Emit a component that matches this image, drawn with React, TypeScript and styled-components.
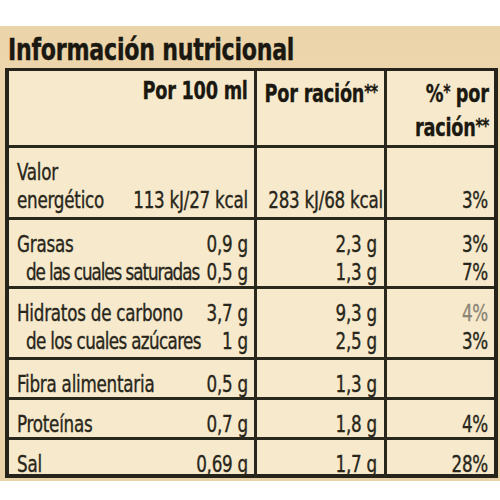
import React from 'react'
import styled, { createGlobalStyle } from 'styled-components'

// no condensed Myriad available: DejaVu Sans Condensed squeezed horizontally
const BODY_SQUEEZE = 0.81
const HEAD_SQUEEZE = 0.82

const GlobalStyle = createGlobalStyle`
  html, body {
    margin: 0;
    padding: 0;
    background: #ffffff;
    overflow: hidden;
  }
  body {
    font-family: "DejaVu Sans Condensed", "Liberation Sans", sans-serif;
  }
`

interface Line {
	label?: string
	indent?: boolean
	tight?: number
	per100?: string
	portion?: string
	pct?: string
	faded?: boolean
}

interface Row {
	key: string
	height: number
	lines: Line[]
}

const rows: Row[] = [
	{
		key: 'energia',
		height: 69,
		lines: [
			{ label: 'Valor' },
			{ label: 'energético', per100: '113 kJ/27 kcal', portion: '283 kJ/68 kcal', pct: '3%' },
		],
	},
	{
		key: 'grasas',
		height: 66,
		lines: [
			{ label: 'Grasas', per100: '0,9 g', portion: '2,3 g', pct: '3%' },
			{ label: 'de las cuales saturadas', indent: true, tight: -1.3, per100: '0,5 g', portion: '1,3 g', pct: '7%' },
		],
	},
	{
		key: 'hidratos',
		height: 68,
		lines: [
			{ label: 'Hidratos de carbono', per100: '3,7 g', portion: '9,3 g', pct: '4%', faded: true },
			{ label: 'de los cuales azúcares', indent: true, tight: -0.8, per100: '1 g', portion: '2,5 g', pct: '3%' },
		],
	},
	{ key: 'fibra', height: 37, lines: [{ label: 'Fibra alimentaria', per100: '0,5 g', portion: '1,3 g' }] },
	{ key: 'proteinas', height: 37, lines: [{ label: 'Proteínas', per100: '0,7 g', portion: '1,8 g', pct: '4%' }] },
	{ key: 'sal', height: 34, lines: [{ label: 'Sal', per100: '0,69 g', portion: '1,7 g', pct: '28%' }] },
]

const Label = styled.div`
    margin-top: 26px;
    background: linear-gradient(180deg, #ecd4aa 0%, #efd9b2 40%, #ead2a8 100%);
    padding: 6px 2px 3px 5px;
`

const Title = styled.h1`
    margin: 0 0 0 3px;
    font-size: 30px;
    line-height: 36px;
    font-weight: bold;
    letter-spacing: -0.3px;
    color: #1a1810;
    -webkit-text-stroke: 0.4px #1a1810;
    white-space: nowrap;
    transform: scaleX(0.82);
    transform-origin: left top;
`

const Table = styled.div`
    border: 4px solid #26241a;
    border-top-width: 3px;
    background: #f6e9cc;
    color: #28261a;
`

const TableRow = styled.div<{ $height: number, $last?: boolean }>`
    display: grid;
    grid-template-columns: 245px 130px 1fr;
    height: ${props => props.$height}px;
    border-bottom: ${props => (props.$last ? 'none' : '3px solid #2a281c')};
`

const Cell = styled.div<{ $pad: number }>`
    display: flex;
    flex-direction: column;
    padding: 10px ${props => props.$pad}px 0 8px;
    & + & {
        border-left: 3px solid #2a281c;
    }
`

const HeaderCell = styled(Cell)`
    padding-top: 5px;
    align-items: flex-end;
`

const HeaderText = styled.div`
    width: calc(100% / ${HEAD_SQUEEZE});
    text-align: right;
    font-weight: bold;
    font-size: 24px;
    line-height: 31px;
    letter-spacing: -0.3px;
    color: #1a1810;
    -webkit-text-stroke: 0.3px #1a1810;
    white-space: nowrap;
    transform: scaleX(${HEAD_SQUEEZE});
    transform-origin: right top;
`

const Stars = styled.span`
    font-size: 19px;
    vertical-align: 4px;
    letter-spacing: -1px;
`

const TextLine = styled.div<{ $indent?: boolean }>`
    display: flex;
    align-items: baseline;
    width: calc(100% / ${BODY_SQUEEZE});
    height: 28px;
    font-size: 23px;
    line-height: 28px;
    letter-spacing: -0.3px;
    -webkit-text-stroke: 0.35px #28261a;
    white-space: nowrap;
    padding-left: ${props => (props.$indent ? 11 : 0)}px;
    box-sizing: border-box;
    transform: scaleX(${BODY_SQUEEZE});
    transform-origin: left top;
`

const Name = styled.span<{ $tight?: number }>`
    letter-spacing: ${props => props.$tight ?? -0.3}px;
`

const Value = styled.span<{ $faded?: boolean }>`
    margin-left: auto;
    padding-left: 4px;
    color: ${props => (props.$faded ? '#8d8676' : 'inherit')};
    -webkit-text-stroke-color: ${props => (props.$faded ? '#8d8676' : '#28261a')};
`

const App = () => (
	<>
		<GlobalStyle />
		<Label>
			<Title>Información nutricional</Title>
			<Table>
				<TableRow $height={74}>
					<HeaderCell $pad={6}>
						<HeaderText>Por 100 ml</HeaderText>
					</HeaderCell>
					<HeaderCell $pad={7}>
						<HeaderText>Por ración<Stars>**</Stars></HeaderText>
					</HeaderCell>
					<HeaderCell $pad={5}>
						<HeaderText>%<Stars>*</Stars> por<br />ración<Stars>**</Stars></HeaderText>
					</HeaderCell>
				</TableRow>
				{rows.map((row, i) => (
					<TableRow key={row.key} $height={row.height} $last={i === rows.length - 1}>
						<Cell $pad={6}>
							{row.lines.map((line, j) => (
								<TextLine key={j} $indent={line.indent}>
									<Name $tight={line.tight}>{line.label}</Name>
									<Value>{line.per100}</Value>
								</TextLine>
							))}
						</Cell>
						<Cell $pad={7}>
							{row.lines.map((line, j) => (
								<TextLine key={j}><Value>{line.portion}</Value></TextLine>
							))}
						</Cell>
						<Cell $pad={6}>
							{row.lines.map((line, j) => (
								<TextLine key={j}><Value $faded={line.faded}>{line.pct}</Value></TextLine>
							))}
						</Cell>
					</TableRow>
				))}
			</Table>
		</Label>
	</>
)

export default App
